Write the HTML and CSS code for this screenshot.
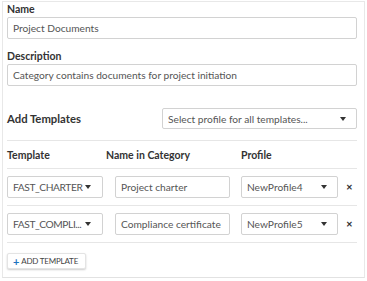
FILE: index.html
```
<!DOCTYPE html>
<html lang="en">
<head>
    <meta charset="UTF-8">
    <meta name="viewport" content="width=device-width, initial-scale=1.0">
    <title>Category</title>
    <link rel="stylesheet" href="styles.css">
</head>
<body>
    <div class="panel">
        <div class="field">
            <label class="field-label">Name</label>
            <div class="text-input">Project Documents</div>
        </div>
        <div class="field">
            <label class="field-label">Description</label>
            <div class="text-input">Category contains documents for project initiation</div>
        </div>

        <div class="templates-head">
            <h3 class="section-title">Add Templates</h3>
            <div class="select select-all">
                <span class="select-text">Select profile for all templates...</span>
                <span class="caret"></span>
            </div>
        </div>

        <div class="tpl-table">
            <div class="tpl-row tpl-header">
                <div>Template</div>
                <div>Name in Category</div>
                <div>Profile</div>
                <div></div>
            </div>
            <div class="tpl-row">
                <div class="select tpl-select template-pick"><span class="select-text">FAST_CHARTER</span><span class="caret"></span></div>
                <div class="name-cell"><div class="text-input">Project charter</div></div>
                <div class="select tpl-select"><span class="select-text">NewProfile4</span><span class="caret"></span></div>
                <div class="remove">&#x2715;</div>
            </div>
            <div class="tpl-row">
                <div class="select tpl-select template-pick"><span class="select-text">FAST_COMPLI...</span><span class="caret"></span></div>
                <div class="name-cell"><div class="text-input">Compliance certificate</div></div>
                <div class="select tpl-select"><span class="select-text">NewProfile5</span><span class="caret"></span></div>
                <div class="remove">&#x2715;</div>
            </div>
        </div>

        <button class="add-btn"><span class="plus">+</span>ADD TEMPLATE</button>
    </div>
</body>
</html>
```

FILE: styles.css
```
body {
    margin: 0;
    background-color: #fff;
    font-family: Lato, "Noto Sans", sans-serif;
    color: #333;
}
.panel {
    margin: 1px 2px 0 2px;
    border: 1px solid #e8e8e8;
    border-bottom-color: #e2e2e2;
    padding: 0 7px 8px 4px;
    width: 350px;
}
.field {
    margin-bottom: 10px;
}
.field-label {
    display: block;
    font-size: 10.5px;
    font-weight: bold;
    line-height: 14px;
    margin-bottom: 1px;
}
.text-input {
    box-sizing: border-box;
    height: 22px;
    border: 1px solid #d2d2d2;
    border-radius: 2px;
    padding: 0 5px;
    font-size: 10.2px;
    line-height: 20px;
    color: #555;
    white-space: nowrap;
    overflow: hidden;
}
.templates-head {
    display: flex;
    justify-content: space-between;
    align-items: center;
    margin-top: 22px;
    padding-bottom: 11px;
    border-bottom: 1px solid #e6e6e6;
}
.section-title {
    margin: 0;
    font-size: 11.3px;
    font-weight: bold;
}
.select {
    box-sizing: border-box;
    display: flex;
    align-items: center;
    justify-content: space-between;
    border: 1px solid #d2d2d2;
    border-radius: 2px;
    padding: 0 10px 0 5px;
    font-size: 10.2px;
    color: #555;
    white-space: nowrap;
}
.select-all {
    width: 195px;
    height: 21px;
}
.caret {
    width: 0;
    height: 0;
    border-left: 3.5px solid transparent;
    border-right: 3.5px solid transparent;
    border-top: 4px solid #333;
}
.tpl-row {
    display: grid;
    grid-template-columns: 99px 135px 97px 1fr;
    align-items: center;
    padding: 7px 0;
    border-bottom: 1px solid #e6e6e6;
}
.tpl-header {
    padding: 0;
    height: 27px;
    font-size: 10.5px;
    font-weight: bold;
}
.tpl-select {
    height: 22px;
}
.template-pick {
    width: 96px;
    padding-right: 11px;
}
.template-pick .select-text {
    letter-spacing: -0.4px;
}
.name-cell {
    padding-left: 9px;
}
.name-cell .text-input {
    width: 115px;
}
.remove {
    text-align: right;
    font-size: 8px;
    font-weight: bold;
    color: #333;
    padding-right: 4px;
}
.add-btn {
    margin-top: 10px;
    height: 16px;
    width: 79px;
    padding: 0 5px;
    border: 1px solid #e4e4e4;
    border-radius: 2px;
    background: #fff;
    box-shadow: 0 1px 2px rgba(0, 0, 0, 0.2);
    font-family: inherit;
    font-size: 8px;
    letter-spacing: -0.2px;
    color: #444;
    display: flex;
    align-items: center;
}
.plus {
    color: #1e73be;
    font-size: 11px;
    font-weight: bold;
    margin-right: 2px;
}
```
